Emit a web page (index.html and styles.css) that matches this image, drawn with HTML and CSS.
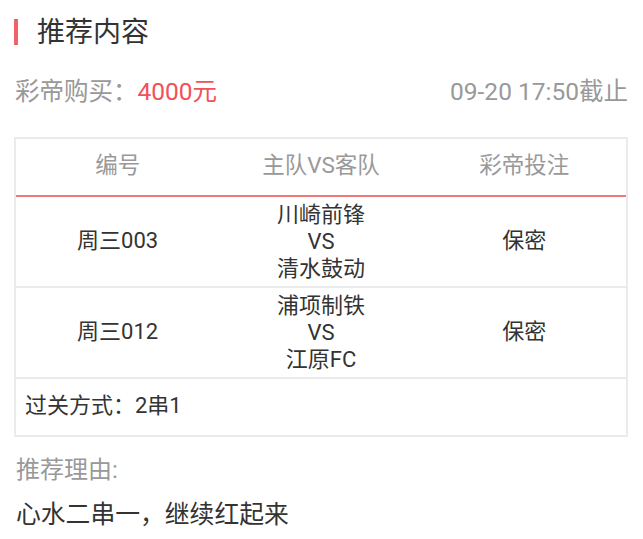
FILE: index.html
```html
<!DOCTYPE html>
<html lang="zh">
<head>
<meta charset="utf-8">
<link rel="stylesheet" href="styles.css">
</head>
<body>
<div class="page">
  <div class="title">
    <span class="title-bar"></span>
    <span class="title-text">推荐内容</span>
  </div>
  <div class="info">
    <div class="price">彩帝购买：<span class="red">4000元</span></div>
    <div class="deadline">09-20 17:50截止</div>
  </div>
  <div class="table">
    <div class="row head">
      <div class="cell">编号</div>
      <div class="cell">主队VS客队</div>
      <div class="cell">彩帝投注</div>
    </div>
    <div class="row match">
      <div class="cell">周三003</div>
      <div class="cell teams"><span>川崎前锋</span><span>VS</span><span>清水鼓动</span></div>
      <div class="cell">保密</div>
    </div>
    <div class="row match">
      <div class="cell">周三012</div>
      <div class="cell teams"><span>浦项制铁</span><span>VS</span><span>江原FC</span></div>
      <div class="cell">保密</div>
    </div>
    <div class="foot">过关方式：2串1</div>
  </div>
  <div class="reason-label">推荐理由:</div>
  <div class="reason">心水二串一，继续红起来</div>
</div>
</body>
</html>
```
FILE: styles.css
```css
* { box-sizing: border-box; }
body {
  margin: 0;
  background: #fff;
  font-family: Roboto, "Noto Sans CJK SC", sans-serif;
  color: #333;
}
.page { width: 643px; }
.title {
  display: flex;
  align-items: center;
  height: 64px;
  padding-left: 14px;
}
.title-bar {
  width: 4px;
  height: 26px;
  background: #f0616a;
  margin-right: 19px;
}
.title-text {
  font-size: 28px;
  line-height: 32px;
  margin-top: 2px;
  color: #333;
}
.info {
  display: flex;
  justify-content: space-between;
  align-items: center;
  height: 52px;
  padding: 3px 15px 0 15px;
  font-size: 24.5px;
  line-height: 28px;
  color: #999;
}
.red { color: #f0515a; }
.table {
  margin: 21px 15px 0 14px;
  border: 2px solid #ebebeb;
}
.row {
  display: grid;
  grid-template-columns: 1fr 1fr 1fr;
}
.cell {
  display: flex;
  flex-direction: column;
  align-items: center;
  justify-content: center;
  font-size: 22px;
  line-height: 27px;
  padding-bottom: 3px;
}
.teams { padding-bottom: 0; }
.head {
  height: 58px;
  border-bottom: 2px solid #f07a7a;
  color: #999;
}
.head .cell { font-size: 22.5px; }
.match {
  height: 91px;
  border-bottom: 2px solid #ebebeb;
  color: #333;
}
.teams span { line-height: 27px; }
.foot {
  height: 56px;
  display: flex;
  align-items: center;
  padding-left: 9px;
  padding-bottom: 3px;
  font-size: 22px;
  line-height: 27px;
  color: #333;
}
.reason-label {
  margin-top: 18px;
  padding-left: 16px;
  font-size: 24px;
  line-height: 30px;
  color: #999;
}
.reason {
  margin-top: 15px;
  padding-left: 16px;
  font-size: 24.8px;
  line-height: 30px;
  color: #333;
}
```
